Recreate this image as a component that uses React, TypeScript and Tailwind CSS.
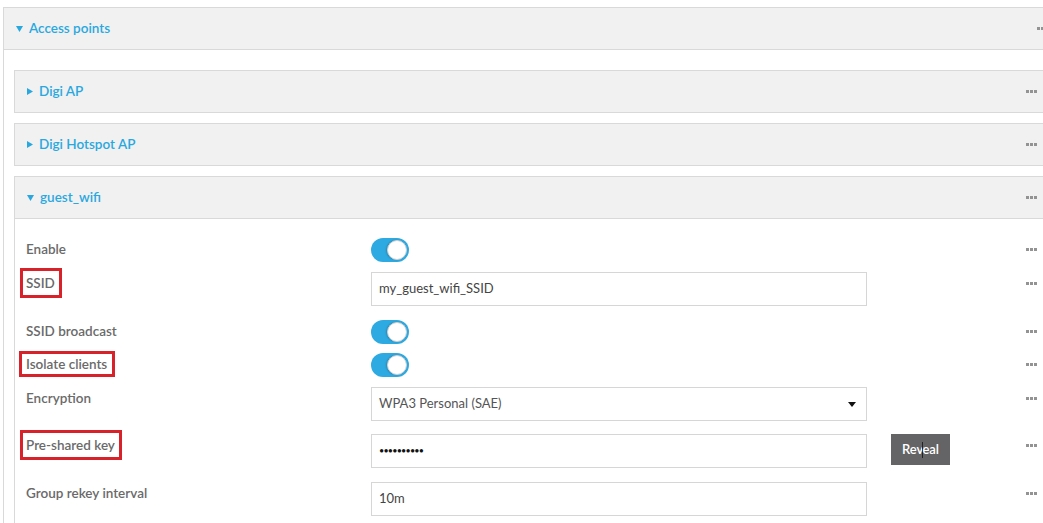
import type { ReactNode } from 'react'

const font = { fontFamily: 'Lato, "Open Sans", sans-serif' }

// little three-square menu handle on the right of every row/header
function Dots() {
  return (
    <span className="flex gap-px">
      <span className="h-[3px] w-[3px] bg-[#939393]" />
      <span className="h-[3px] w-[3px] bg-[#939393]" />
      <span className="h-[3px] w-[3px] bg-[#939393]" />
    </span>
  )
}

function Caret({ open }: { open: boolean }) {
  return open ? (
    <svg width="7" height="6" viewBox="0 0 7 6" className="shrink-0">
      <polygon points="0,0 7,0 3.5,6" fill="#29a8df" />
    </svg>
  ) : (
    <svg width="6" height="7" viewBox="0 0 6 7" className="shrink-0">
      <polygon points="0,0 6,3.5 0,7" fill="#29a8df" />
    </svg>
  )
}

function PanelHeader({ title, open }: { title: string; open: boolean }) {
  return (
    <div className="flex h-[41px] items-center justify-between bg-[#f1f1f1] pl-[12px] pr-[9px]">
      <div className="flex items-center gap-[6px] text-[13.5px] font-semibold text-[#29a8df]">
        <Caret open={open} />
        <span>{title}</span>
      </div>
      <Dots />
    </div>
  )
}

function Toggle() {
  return (
    <div className="relative h-[24px] w-[38px] rounded-full bg-[#2eaae2]">
      <span className="absolute right-[2px] top-[2px] h-[20px] w-[20px] rounded-full border border-[#cfcfcf] bg-white shadow-[-1px_0_2px_rgba(0,0,0,0.2)]" />
    </div>
  )
}

function TextBox({ children }: { children: ReactNode }) {
  return (
    <div className="flex h-[34px] w-[496px] items-center border border-[#d6d6d6] bg-white px-[7px] text-[13px] text-[#444]">
      {children}
    </div>
  )
}

function Marked({ children, tight }: { children: ReactNode; tight?: boolean }) {
  return (
    <span
      className={
        tight
          ? '-my-[3px] -ml-[7px] inline-block border-[3px] border-[#d8222a] py-0 pl-[4px] pr-[5px]'
          : '-my-[5px] -ml-[6px] inline-block border-[3px] border-[#d8222a] py-[2px] pl-[3px] pr-[4px]'
      }
    >
      {children}
    </span>
  )
}

function Row({
  label,
  h,
  children,
  extra,
}: {
  label: ReactNode
  h: string
  children: ReactNode
  extra?: ReactNode
}) {
  return (
    <div className={`flex items-start ${h}`}>
      <div className="w-[345px] shrink-0 pt-px text-[13.5px] font-semibold leading-5 text-[#6a6a6a]">{label}</div>
      <div className="shrink-0">{children}</div>
      <div className="ml-[24px] w-[60px] shrink-0">{extra}</div>
      <div className="ml-auto flex h-5 items-center pr-[9px] pt-[2px]">
        <Dots />
      </div>
    </div>
  )
}

export default function App() {
  return (
    <div className="h-[523px] w-[1043px] overflow-hidden bg-white pt-[7px]" style={font}>
      <div className="ml-[3px] w-[1055px] border border-[#d9d9d9]">
        <div className="border-b border-[#d9d9d9]">
          <PanelHeader title="Access points" open />
        </div>

        <div className="flex flex-col gap-[10px] pl-[10px] pr-[10px] pt-[20px]">
          <div className="border border-[#d9d9d9]">
            <PanelHeader title="Digi AP" open={false} />
          </div>
          <div className="border border-[#d9d9d9]">
            <PanelHeader title="Digi Hotspot AP" open={false} />
          </div>

          <div className="border border-[#d9d9d9]">
            <div className="border-b border-[#d9d9d9]">
              <PanelHeader title="guest_wifi" open />
            </div>
            <div className="pl-[11px] pt-[19px]">
              <Row label="Enable" h="h-[34px]">
                <Toggle />
              </Row>
              <Row label={<Marked>SSID</Marked>} h="h-[48px]">
                <TextBox>my_guest_wifi_SSID</TextBox>
              </Row>
              <Row label="SSID broadcast" h="h-[33px]">
                <Toggle />
              </Row>
              <Row label={<Marked tight>Isolate clients</Marked>} h="h-[34px]">
                <Toggle />
              </Row>
              <Row label="Encryption" h="h-[47px]">
                <TextBox>
                  <span className="flex-1 text-[#555]">WPA3 Personal (SAE)</span>
                  <svg width="8" height="5" viewBox="0 0 8 5" className="mr-[3px]">
                    <polygon points="0,0 8,0 4,5" fill="#111" />
                  </svg>
                </TextBox>
              </Row>
              <Row
                label={<Marked>Pre-shared key</Marked>}
                h="h-[48px]"
                extra={
                  <button className="relative flex h-[31px] w-[59px] items-center justify-center bg-[#646466] text-[13px] font-semibold text-white">
                    Rev
                    <span className="mx-[-1px] inline-block h-[16px] w-px bg-[#222]" />
                    eal
                  </button>
                }
              >
                <TextBox>
                  <span className="text-[9px] tracking-[-0.8px] text-[#111]">••••••••••</span>
                </TextBox>
              </Row>
              <Row label="Group rekey interval" h="h-[48px]">
                <TextBox>10m</TextBox>
              </Row>
            </div>
          </div>
        </div>
      </div>
    </div>
  )
}
